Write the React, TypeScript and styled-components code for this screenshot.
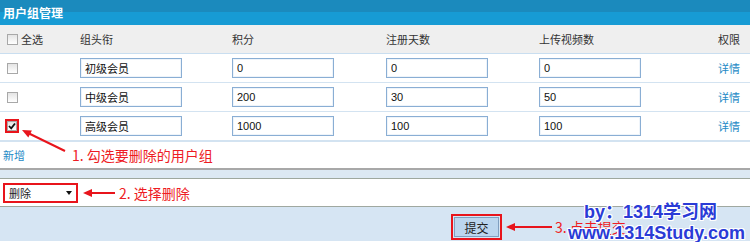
import React from 'react';
import styled, { createGlobalStyle } from 'styled-components';

const GlobalStyle = createGlobalStyle`
  body {
    margin: 0;
    background: #fff;
    font-family: "Noto Sans CJK SC", "Liberation Sans", sans-serif;
  }
`;

const cols = '80px 152px 154px 153px 179px 1fr';

const Page = styled.div`
  position: relative;
  width: 750px;
  height: 242px;
  overflow: hidden;
  font-size: 11px;
  color: #333;
`;

const TitleBar = styled.div`
  height: 25px;
  padding-left: 3px;
  display: flex;
  align-items: center;
  background: linear-gradient(#1b8abd 0%, #1b8abd 50%, #179bd4 50%, #179bd4 100%);
  color: #fff;
  font-weight: bold;
  font-size: 12px;
`;

const HeadRow = styled.div`
  display: grid;
  grid-template-columns: ${cols};
  align-items: center;
  height: 28px;
  background: #efefef;
  border-bottom: 1px solid #c9def0;
`;

const Row = styled.div<{ $last?: boolean }>`
  display: grid;
  grid-template-columns: ${cols};
  align-items: center;
  height: 28px;
  border-bottom: ${(p) => (p.$last ? 2 : 1)}px solid #d3e3f1;
`;

const FirstCell = styled.div`
  display: flex;
  align-items: center;
  gap: 3px;
  padding-left: 7px;
`;

const Check = styled.span<{ $small?: boolean }>`
  box-sizing: border-box;
  width: ${(p) => (p.$small ? 10 : 11)}px;
  height: ${(p) => (p.$small ? 10 : 11)}px;
  border: 1px solid #a8a8a8;
  background: linear-gradient(#e4e4e4, #fff);
  display: inline-flex;
  align-items: center;
  justify-content: center;
`;

const RedMark = styled.span`
  box-sizing: border-box;
  width: 14px;
  height: 14px;
  margin-left: -2px;
  border: 2px solid #e8141b;
  display: inline-flex;
`;

const Field = styled.input`
  box-sizing: border-box;
  width: 102px;
  height: 20px;
  border: 1px solid #8aaed4;
  box-shadow: inset 0 0 0 1px #eef4fa;
  padding: 0 4px;
  font-family: "Liberation Sans", "Noto Sans CJK SC", sans-serif;
  font-size: 11px;
  color: #111;
  outline: none;
`;

const Link = styled.span`
  color: #1e8ac6;
  cursor: pointer;
`;

const AddRow = styled.div`
  height: 26px;
  padding-left: 3px;
  display: flex;
  align-items: center;
`;

const Note = styled.span<{ $ml: number }>`
  margin-left: ${(p) => p.$ml}px;
  color: #ee1c24;
  font-size: 14px;
`;

const Divider = styled.div`
  height: 8px;
  background: #dce8f3;
  border-top: 2px solid #a8a8a8;
  border-bottom: 1px solid #9ea79e;
`;

const ActionBar = styled.div`
  height: 27px;
  padding-left: 3px;
  display: flex;
  align-items: center;
  background: #fff;
  border-bottom: 1px solid #a0a8a0;
`;

const SelectBox = styled.div`
  box-sizing: border-box;
  width: 75px;
  height: 20px;
  border: 2px solid #e8141b;
  padding: 0 4px 0 4px;
  display: flex;
  align-items: center;
  justify-content: space-between;
  color: #222;
  background: #fff;
`;

const Caret = styled.span`
  width: 0;
  height: 0;
  border-left: 3.5px solid transparent;
  border-right: 3.5px solid transparent;
  border-top: 4px solid #111;
`;

const Footer = styled.div`
  height: 34px;
  box-sizing: border-box;
  padding: 7px 0 0 451px;
  background: #d6e5f3;
  display: flex;
  align-items: flex-start;
`;

const FooterLine = styled.div`
  display: flex;
  align-items: center;
`;

const SubmitFrame = styled.div`
  border: 2px solid #e8141b;
  padding: 1px;
  display: flex;
`;

const Submit = styled.button`
  box-sizing: border-box;
  width: 45px;
  height: 20px;
  padding: 0;
  border: 1px solid #7f9fc0;
  background: #bcd6ee;
  font-family: "Noto Sans CJK SC", sans-serif;
  font-size: 12px;
  color: #222;
`;

const Arrow = styled.svg<{ $ml: number }>`
  display: block;
  margin-left: ${(p) => p.$ml}px;
`;

const DiagArrow = styled.svg`
  position: absolute;
  left: 18px;
  top: 122px;
`;

const Watermark = styled.div`
  position: absolute;
  right: 5px;
  top: 202px;
  display: flex;
  flex-direction: column;
  align-items: center;
  font-family: "Liberation Sans", "Noto Sans CJK SC", sans-serif;
  font-weight: bold;
  font-size: 18px;
  line-height: 21px;
  color: #2a3bd6;
  text-shadow: 1px 0 #fff, -1px 0 #fff, 0 1px #fff, 0 -1px #fff, 1px 1px #fff, -1px -1px #fff,
    1px -1px #fff, -1px 1px #fff;
  pointer-events: none;
`;

const MarkLine = styled.div<{ $mr?: number }>`
  margin-right: ${(p) => p.$mr ?? 0}px;
  white-space: nowrap;
`;

const LeftArrow = ({ width, ml }: { width: number; ml: number }) => (
  <Arrow $ml={ml} width={width} height={10} viewBox={`0 0 ${width} 10`}>
    <line x1={6} y1={5} x2={width} y2={5} stroke="#e8141b" strokeWidth={2} />
    <polygon points="0,5 9,1 9,9" fill="#e8141b" />
  </Arrow>
);

const groups = [
  { name: '初级会员', score: '0', days: '0', videos: '0' },
  { name: '中级会员', score: '200', days: '30', videos: '50' },
  { name: '高级会员', score: '1000', days: '100', videos: '100' },
];

const App: React.FC = () => (
  <Page>
    <GlobalStyle />
    <TitleBar>用户组管理</TitleBar>
    <HeadRow>
      <FirstCell>
        <Check />
        <span>全选</span>
      </FirstCell>
      <span>组头衔</span>
      <span>积分</span>
      <span>注册天数</span>
      <span>上传视频数</span>
      <span>权限</span>
    </HeadRow>
    {groups.map((g, i) => {
      const last = i === groups.length - 1;
      return (
        <Row key={g.name} $last={last}>
          <FirstCell>
            {last ? (
              <RedMark>
                <Check $small>
                  <svg width="8" height="8" viewBox="0 0 8 8">
                    <path d="M1 4 L3.2 6.3 L7 1.5" fill="none" stroke="#111" strokeWidth="1.8" />
                  </svg>
                </Check>
              </RedMark>
            ) : (
              <Check />
            )}
          </FirstCell>
          <div><Field readOnly defaultValue={g.name} /></div>
          <div><Field readOnly defaultValue={g.score} /></div>
          <div><Field readOnly defaultValue={g.days} /></div>
          <div><Field readOnly defaultValue={g.videos} /></div>
          <Link>详情</Link>
        </Row>
      );
    })}
    <AddRow>
      <Link>新增</Link>
      <Note $ml={47}>1. 勾选要删除的用户组</Note>
    </AddRow>
    <Divider />
    <ActionBar>
      <SelectBox>
        <span>删除</span>
        <Caret />
      </SelectBox>
      <LeftArrow width={32} ml={5} />
      <Note $ml={4}>2. 选择删除</Note>
    </ActionBar>
    <Footer>
      <FooterLine>
        <SubmitFrame>
          <Submit>提交</Submit>
        </SubmitFrame>
        <LeftArrow width={46} ml={4} />
        <Note $ml={3}>3. 点击提交</Note>
      </FooterLine>
    </Footer>
    <DiagArrow width={52} height={34} viewBox="0 0 52 34">
      <line x1={9} y1={10.5} x2={47} y2={29} stroke="#e8141b" strokeWidth={2} />
      <polygon points="4,8 10.3,15.6 13.9,8.4" fill="#e8141b" />
    </DiagArrow>
    <Watermark>
      <MarkLine $mr={12}>by：1314学习网</MarkLine>
      <MarkLine>www.1314Study.com</MarkLine>
    </Watermark>
  </Page>
);

export default App;
